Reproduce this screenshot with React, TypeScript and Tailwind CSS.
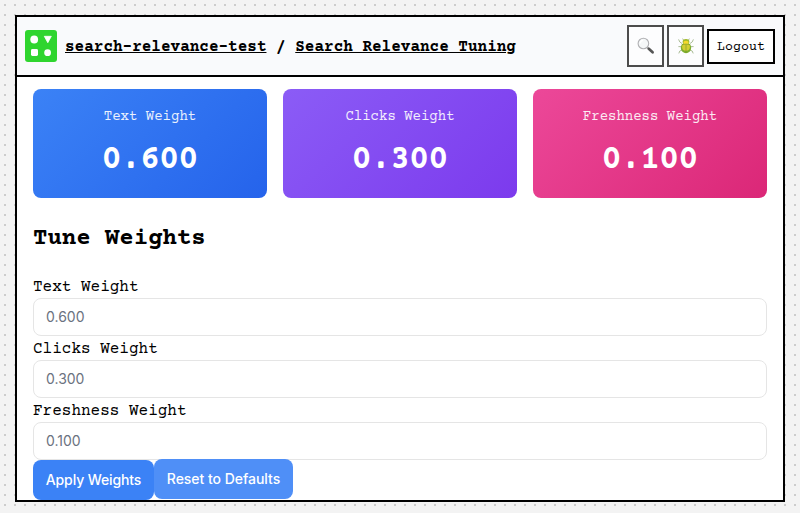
import React from "react";

const weights = [
  { label: "Text Weight", value: "0.600", tone: "bg-[linear-gradient(135deg,#3b82f6,#2563eb)]" },
  { label: "Clicks Weight", value: "0.300", tone: "bg-[linear-gradient(135deg,#8b5cf6,#7c3aed)]" },
  { label: "Freshness Weight", value: "0.100", tone: "bg-[linear-gradient(135deg,#ec4899,#db2777)]" },
];

function Logo() {
  return (
    <svg width="32" height="32" viewBox="0 0 32 32" className="shrink-0">
      <rect width="32" height="32" rx="3" fill="#2fd52f" />
      <circle cx="9.2" cy="9.5" r="3.9" fill="#fff" />
      <path d="M19.3 6.3h7l-3.5 6.4z" fill="#fff" stroke="#fff" strokeWidth=".8" strokeLinejoin="round" />
      <rect x="6" y="19" width="7" height="7" rx="1.4" fill="#fff" />
      <circle cx="22.6" cy="22.7" r="3.4" fill="#fff" />
    </svg>
  );
}

function Magnifier() {
  return (
    <svg width="18" height="18" viewBox="0 0 18 18">
      <path d="M10.2 10.4l1.9 1.8" stroke="#999" strokeWidth="1.5" />
      <path d="M11.8 11.8l3.8 3.5" stroke="#555" strokeWidth="2.7" strokeLinecap="round" />
      <circle cx="6.4" cy="6.5" r="5.3" fill="#f5f7f8" stroke="#b0b0b3" strokeWidth="1.1" />
      <path d="M3.2 6.4a3.2 3.2 0 0 1 2.9-3" stroke="#fff" strokeWidth="1.2" fill="none" />
    </svg>
  );
}

function Beetle() {
  return (
    <svg width="18" height="18" viewBox="0 0 18 18">
      <path
        d="M7 3.8L5.6 1.6M11 3.8l1.4-2.2M5 6.5L2.8 5 1.6 2.4M13 6.5L15.2 5l1.2-2.6M4 9.6H1.4M14 9.6h2.6M5 13l-2.2 1-1 2.4M13 13l2.2 1 1 2.4"
        stroke="#a3b58c"
        strokeWidth=".9"
        fill="none"
      />
      <ellipse cx="9" cy="4.8" rx="3.4" ry="2.8" fill="#a3bb2b" />
      <ellipse cx="9" cy="10.8" rx="5.2" ry="5.4" fill="#7fae2e" />
      <ellipse cx="9" cy="9.8" rx="3.9" ry="4" fill="#d3cf32" />
      <ellipse cx="9" cy="5.4" rx="2.6" ry="1.7" fill="#f6d92c" />
      <path d="M4.6 7.8q4.4-1.4 8.8 0M9 7.4v8.6" stroke="#7c9625" strokeWidth=".6" fill="none" />
    </svg>
  );
}

export default function App() {
  return (
    <div className="h-[513px] w-full overflow-hidden bg-[#f3f3f3] bg-[conic-gradient(from_90deg_at_8px_8px,#ccc_90deg,transparent_0)] bg-[length:10px_10px] bg-[position:-4px_-4px] px-[15px] pt-[15px] font-['Courier_Prime','Liberation_Mono',monospace] text-black">
      <div className="h-[487px] border-2 border-black bg-white">
        <header className="flex h-[60px] items-center border-b-2 border-black bg-[#f9fafc] px-2">
          <Logo />
          <h1 className="ml-2 flex-1 whitespace-pre pt-0.5 text-base font-bold">
            <a className="underline">search-relevance-test</a> / <a className="underline">Search Relevance Tuning</a>
          </h1>
          <div className="flex items-center gap-[3px]">
            <button className="flex h-[42px] w-[37px] items-center justify-center border-2 border-[#4c4c4c] bg-[#fdfdfe]"><Magnifier /></button>
            <button className="flex h-[42px] w-[37px] items-center justify-center border-2 border-[#4c4c4c] bg-[#fdfdfe]"><Beetle /></button>
            <button className="h-[35px] w-[68px] border-2 border-black bg-white pt-1 text-[13.333px]">Logout</button>
          </div>
        </header>
        <main className="px-4 pt-3">
          <section className="grid grid-cols-3 gap-4">
            {weights.map((w) => (
              <div key={w.label} className={`h-[109px] rounded-lg pt-[18px] text-center text-white ${w.tone}`}>
                <div className="text-sm leading-[21px] opacity-90">{w.label}</div>
                <div className="mt-2 scale-y-[1.17] text-[32px] font-bold leading-[48px]">{w.value}</div>
              </div>
            ))}
          </section>
          <h2 className="mt-[23px] text-2xl font-bold leading-9">Tune Weights</h2>
          <form className="mt-[17px]">
            {weights.map((w) => (
              <label key={w.label} className="block">
                <span className="block h-6 pt-px text-base leading-6">{w.label}</span>
                <input
                  className="block h-[38px] w-full rounded-lg border border-[#e5e5e5] bg-white px-3 pb-0.5 font-['Inter',sans-serif] text-sm placeholder:text-[#6b7280]"
                  placeholder={w.value}
                />
              </label>
            ))}
            <div className="flex font-['Inter',sans-serif] text-sm font-medium text-white">
              <button type="button" className="h-10 w-[121px] rounded-lg bg-[#3b82f6] tracking-[-0.12px]">Apply Weights</button>
              <button type="button" className="-mt-px h-10 w-[139px] rounded-lg bg-[#4f8ff7] tracking-[-0.03px]">Reset to Defaults</button>
            </div>
          </form>
        </main>
      </div>
    </div>
  );
}
